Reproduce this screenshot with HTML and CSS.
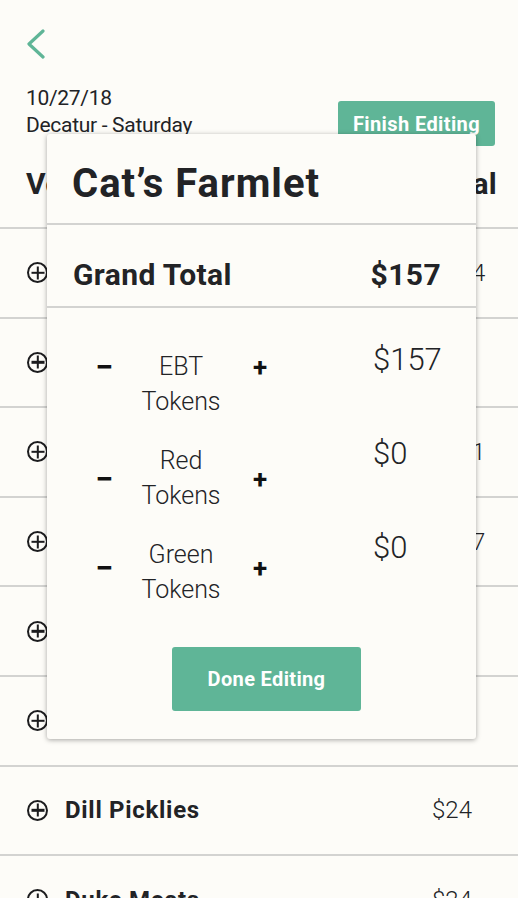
FILE: index.html
```html
<!DOCTYPE html>
<html>
<head>
<meta charset="utf-8">
<link rel="stylesheet" href="styles.css">
</head>
<body>
<div class="page">
  <div class="top">
    <svg class="back" width="20" height="30" viewBox="0 0 20 30"><polyline points="17,2 3,15 17,28" fill="none" stroke="#5fb597" stroke-width="3.2" stroke-linecap="round" stroke-linejoin="round"/></svg>
    <div class="meta">
      <div class="market">
        <div>10/27/18</div>
        <div>Decatur - Saturday</div>
      </div>
      <button class="btn btn-finish">Finish Editing</button>
    </div>
  </div>
  <div class="list">
    <div class="list-head"><span>Vendor</span><span class="col-total">Total</span></div>
    <div class="row"><span class="plus-ico"></span><span class="name">Bee Happy</span><span class="col-total">$124</span></div>
    <div class="row"><span class="plus-ico"></span><span class="name">Fresh Greens</span><span class="col-total">$88</span></div>
    <div class="row"><span class="plus-ico"></span><span class="name">Honey Hill</span><span class="col-total">$101</span></div>
    <div class="row"><span class="plus-ico"></span><span class="name">Cat’s Farmlet</span><span class="col-total">$157</span></div>
    <div class="row"><span class="plus-ico"></span><span class="name">Bread Co.</span><span class="col-total">$36</span></div>
    <div class="row"><span class="plus-ico"></span><span class="name">Egg Farm</span><span class="col-total">$40</span></div>
    <div class="row"><span class="plus-ico"></span><span class="name">Dill Picklies</span><span class="col-total">$24</span></div>
    <div class="row"><span class="plus-ico"></span><span class="name">Duke Meats</span><span class="col-total">$24</span></div>
  </div>

  <div class="modal">
    <div class="modal-title">Cat’s Farmlet</div>
    <div class="grand"><span>Grand Total</span><span>$157</span></div>
    <div class="tokens">
      <div class="token">
        <span class="step minus step-top">−</span>
        <span class="label">EBT<br>Tokens</span>
        <span class="step step-top">+</span>
        <span class="amount">$157</span>
      </div>
      <div class="token">
        <span class="step minus step-mid">−</span>
        <span class="label">Red<br>Tokens</span>
        <span class="step step-mid">+</span>
        <span class="amount">$0</span>
      </div>
      <div class="token">
        <span class="step minus step-mid2">−</span>
        <span class="label">Green<br>Tokens</span>
        <span class="step step-mid2">+</span>
        <span class="amount">$0</span>
      </div>
    </div>
    <button class="btn btn-done">Done Editing</button>
  </div>
</div>
</body>
</html>
```

FILE: styles.css
```css
* { box-sizing: border-box; }
html, body {
  margin: 0;
  background: #fdfcf8;
}
body {
  font-family: Roboto, "Noto Sans", sans-serif;
  color: #222326;
  width: 518px;
  height: 898px;
  overflow: hidden;
}
.page {
  position: relative;
  height: 898px;
  overflow: hidden;
}
.top {
  padding: 29px 23px 0 26px;
}
.back {
  display: block;
}
.meta {
  display: flex;
  justify-content: space-between;
  align-items: flex-start;
  margin-top: 26px;
}
.market {
  font-size: 21px;
  line-height: 27px;
  font-weight: 400;
  letter-spacing: -0.3px;
}
.btn {
  border: none;
  background: #5fb597;
  color: #fff;
  font-family: Roboto, "Noto Sans", sans-serif;
  font-weight: 700;
  border-radius: 3px;
  cursor: pointer;
  padding: 0;
}
.btn-finish {
  width: 157px;
  height: 45px;
  margin-top: 16px;
  font-size: 20px;
  letter-spacing: 0.4px;
}
.list-head {
  display: flex;
  align-items: center;
  height: 83px;
  padding: 0 0 6px 26px;
  font-size: 30px;
  font-weight: 700;
  letter-spacing: 0.3px;
  border-bottom: 2px solid #d3d3d1;
}
.row {
  display: flex;
  align-items: center;
  height: 89.6px;
  padding-left: 27px;
  border-bottom: 2px solid #d3d3d1;
  font-size: 24px;
}
.plus-ico {
  width: 21px;
  height: 21px;
  border: 2px solid #1c1c1e;
  border-radius: 50%;
  position: relative;
  flex: none;
}
.plus-ico::before, .plus-ico::after {
  content: "";
  position: absolute;
  background: #1c1c1e;
  left: 50%;
  top: 50%;
  transform: translate(-50%, -50%);
}
.plus-ico::before { width: 13px; height: 2.4px; }
.plus-ico::after { width: 2.4px; height: 13px; }
.name {
  margin-left: 17px;
  font-weight: 700;
  letter-spacing: 0.7px;
}
.col-total {
  margin-left: auto;
  width: 86px;
  font-weight: 300;
}
.list-head .col-total {
  font-weight: 700;
  width: auto;
  padding-right: 21px;
}

.modal {
  position: absolute;
  left: 47px;
  top: 134px;
  width: 429px;
  height: 605px;
  background: #fdfcf8;
  border-radius: 3px;
  box-shadow: 0 1px 5px rgba(0,0,0,0.35);
  display: flex;
  flex-direction: column;
}
.modal-title {
  height: 91px;
  padding: 26px 0 0 25px;
  font-size: 40px;
  font-weight: 700;
  letter-spacing: 1px;
  border-bottom: 2px solid #d3d3d1;
  line-height: 48px;
}
.grand {
  height: 83px;
  display: flex;
  justify-content: space-between;
  align-items: center;
  padding: 18px 35px 0 26px;
  font-size: 30px;
  font-weight: 700;
  letter-spacing: 0.4px;
  border-bottom: 2px solid #d3d3d1;
}
.tokens {
  padding-top: 41px;
}
.token {
  display: flex;
  align-items: flex-start;
  height: 94px;
  padding-left: 48px;
}
.step {
  width: 18px;
  font-size: 26px;
  font-weight: 700;
  line-height: 35px;
  text-align: center;
  color: #111;
}
.minus {
  font-size: 32px;
}
.step-top { margin-top: 1px; }
.step-mid { margin-top: 19px; }
.step-mid2 { margin-top: 14px; }
.label {
  width: 124px;
  margin: 0 8px 0 6px;
  text-align: center;
  font-size: 25px;
  font-weight: 300;
  line-height: 35px;
}
.amount {
  margin-left: 104px;
  margin-top: -9px;
  font-size: 31px;
  font-weight: 300;
  line-height: 40px;
}
.btn-done {
  align-self: flex-start;
  margin: 16px 0 0 125px;
  width: 189px;
  height: 64px;
  font-size: 20px;
  letter-spacing: 0.35px;
}
```
